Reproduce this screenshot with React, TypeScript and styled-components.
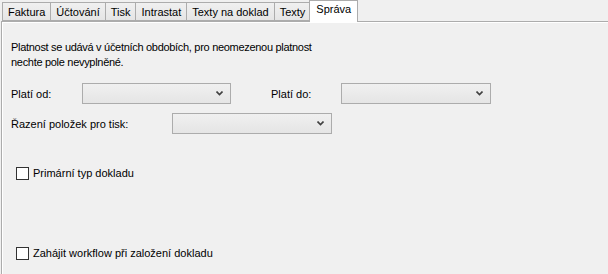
import React from "react";
import styled, { createGlobalStyle } from "styled-components";

const Global = createGlobalStyle`
  html, body { margin: 0; padding: 0; background: #f0f0f0; }
  body { font-family: Tahoma, "Liberation Sans", Arial, sans-serif; font-size: 11px; color: #000; overflow: hidden; }
`;

const Page = styled.div`
  width: 608px;
  height: 274px;
  background: #f0f0f0;
  position: relative;
  overflow: hidden;
`;

const TabBar = styled.div`
  display: flex;
  align-items: flex-end;
  height: 21px;
  padding-left: 2px;
  position: relative;
  z-index: 1;
`;

const Tab = styled.div<{ $active?: boolean }>`
  box-sizing: border-box;
  height: ${(p) => (p.$active ? "22px" : "19px")};
  padding: ${(p) => (p.$active ? "1px 6px 0 6px" : "2px 5px 0 5px")};
  margin-left: ${(p) => (p.$active ? "-2px" : "-1px")};
  margin-bottom: ${(p) => (p.$active ? "-1px" : "0")};
  border: 1px solid #acacac;
  border-bottom: ${(p) => (p.$active ? "none" : "1px solid #acacac")};
  background: ${(p) => (p.$active ? "#ffffff" : "linear-gradient(#f0f0f0, #e5e5e5)")};
  white-space: nowrap;
  line-height: 14px;
  &:first-child { margin-left: 0; }
`;

const Panel = styled.div`
  box-sizing: border-box;
  margin-left: 1px;
  height: 253px;
  border-top: 1px solid #acacac;
  border-left: 1px solid #acacac;
  box-shadow: inset 1px 1px 0 #ffffff;
  padding: 18px 0 0 9px;
  display: flex;
  flex-direction: column;
`;

const Note = styled.p`
  margin: 0;
  line-height: 15px;
  width: 330px;
  letter-spacing: -0.3px;
`;

const Row = styled.div<{ $top: number }>`
  display: flex;
  align-items: center;
  height: 21px;
  margin-top: ${(p) => p.$top}px;
`;

const Label = styled.span<{ $w: number }>`
  width: ${(p) => p.$w}px;
  flex: none;
`;

const Combo = styled.div<{ $w: number; $gap?: number }>`
  box-sizing: border-box;
  width: ${(p) => p.$w}px;
  height: 21px;
  margin-right: ${(p) => p.$gap ?? 0}px;
  border: 1px solid #acacac;
  background: linear-gradient(#f0f0f0, #e5e5e5);
  display: flex;
  align-items: center;
  justify-content: flex-end;
  padding-right: 7px;
  flex: none;
`;

const Chevron = () => (
  <svg width="7" height="5" viewBox="0 0 7 5">
    <path d="M0.5 0.5 L3.5 3.5 L6.5 0.5" stroke="#404040" strokeWidth="1.6" fill="none" />
  </svg>
);

const CheckRow = styled.label<{ $top: number }>`
  display: flex;
  align-items: center;
  gap: 4px;
  margin-top: ${(p) => p.$top}px;
  margin-left: 5px;
  height: 14px;
`;

const Box = styled.span`
  box-sizing: border-box;
  width: 13px;
  height: 13px;
  border: 1px solid #333333;
  background: #ffffff;
  flex: none;
`;

export default function App() {
  const tabs = ["Faktura", "Účtování", "Tisk", "Intrastat", "Texty na doklad", "Texty", "Správa"];
  return (
    <>
      <Global />
      <Page>
        <TabBar>
          {tabs.map((t) => (
            <Tab key={t} $active={t === "Správa"}>{t}</Tab>
          ))}
        </TabBar>
        <Panel>
          <Note>Platnost se udává v účetních obdobích, pro neomezenou platnost nechte pole nevyplněné.</Note>
          <Row $top={13}>
            <Label $w={71}>Platí od:</Label>
            <Combo $w={149} $gap={40}><Chevron /></Combo>
            <Label $w={70}>Platí do:</Label>
            <Combo $w={150}><Chevron /></Combo>
          </Row>
          <Row $top={9}>
            <Label $w={161}>Řazení položek pro tisk:</Label>
            <Combo $w={160}><Chevron /></Combo>
          </Row>
          <CheckRow $top={32}><Box />Primární typ dokladu</CheckRow>
          <CheckRow $top={66}><Box />Zahájit workflow při založení dokladu</CheckRow>
        </Panel>
      </Page>
    </>
  );
}
